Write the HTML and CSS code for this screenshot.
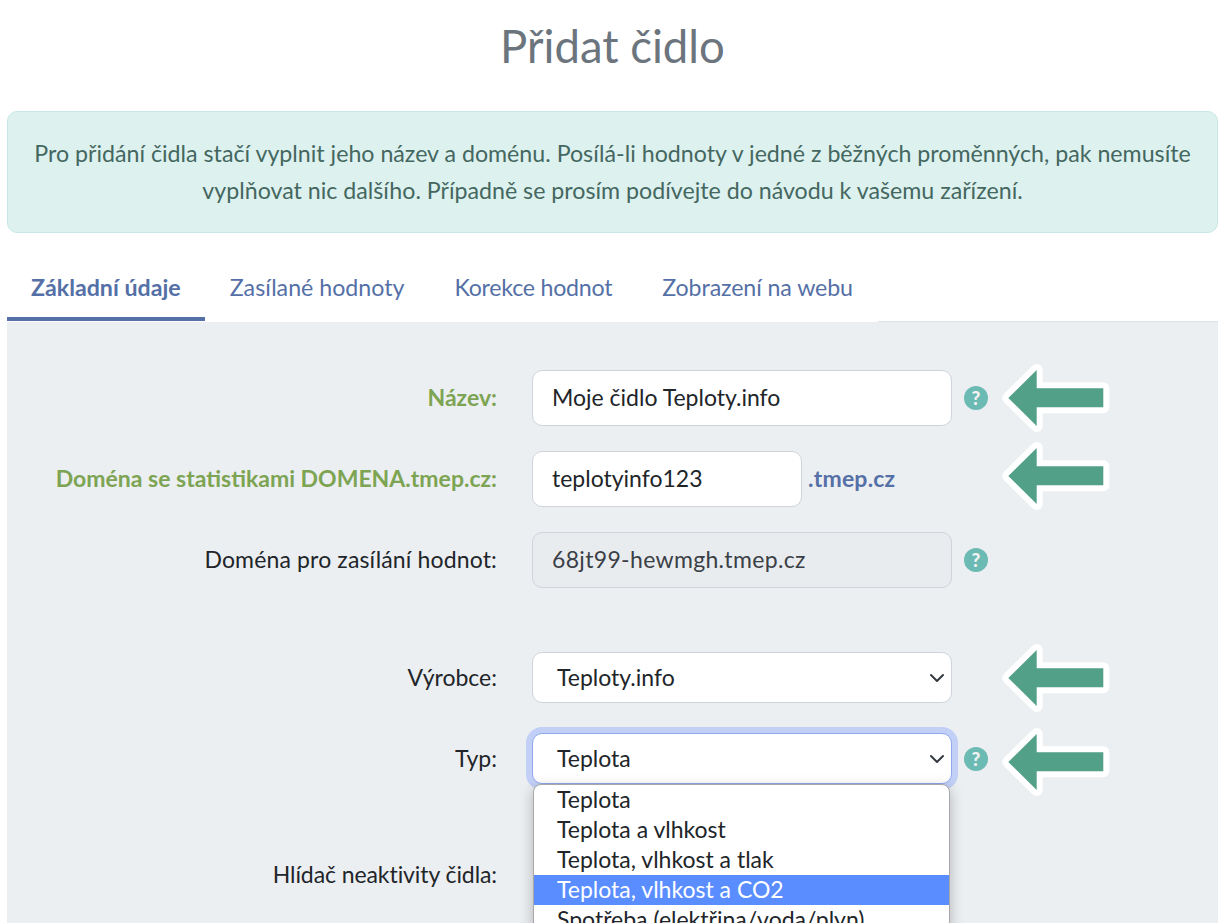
FILE: index.html
```html
<!DOCTYPE html>
<html lang="cs">
<head>
<meta charset="utf-8">
<title>Přidat čidlo</title>
<link rel="stylesheet" href="styles.css">
</head>
<body>
<main class="page">
  <h1 class="title">Přidat čidlo</h1>
  <div class="alert">Pro přidání čidla stačí vyplnit jeho název a doménu. Posílá-li hodnoty v jedné z běžných proměnných, pak nemusíte vyplňovat nic dalšího. Případně se prosím podívejte do návodu k vašemu zařízení.</div>
  <nav class="tabs">
    <a class="tab tab-active">Základní údaje</a>
    <a class="tab">Zasílané hodnoty</a>
    <a class="tab tab-tight">Korekce hodnot</a>
    <a class="tab tab-tight-s">Zobrazení na webu</a>
    <span class="tabs-rest"></span>
  </nav>
  <section class="panel">
    <div class="row">
      <label class="label label-green">Název:</label>
      <div class="field"><input class="control" value="Moje čidlo Teploty.info"></div>
      <span class="help">?</span>
      <svg class="arrow" viewBox="0 0 110 70"><path d="M7.3 35 35.7 7V25.3H102.3V44.3H35.7V63Z"/></svg>
    </div>
    <div class="row">
      <label class="label label-green">Doména se statistikami DOMENA.tmep.cz:</label>
      <div class="field"><input class="control control-short" value="teplotyinfo123"><span class="suffix">.tmep.cz</span></div>
      <span></span>
      <svg class="arrow arrow-up" viewBox="0 0 110 70"><path d="M7.3 35 35.7 7V25.3H102.3V44.3H35.7V63Z"/></svg>
    </div>
    <div class="row">
      <label class="label label-wide">Doména pro zasílání hodnot:</label>
      <div class="field"><input class="control" value="68jt99-hewmgh.tmep.cz" disabled></div>
      <span class="help">?</span>
    </div>
    <div class="row row-select row-maker">
      <label class="label">Výrobce:</label>
      <div class="field"><select class="control select"><option>Teploty.info</option></select></div>
      <span></span>
      <svg class="arrow" viewBox="0 0 110 70"><path d="M7.3 35 35.7 7V25.3H102.3V44.3H35.7V63Z"/></svg>
    </div>
    <div class="row row-select row-type">
      <label class="label">Typ:</label>
      <div class="field">
        <select class="control select select-focus"><option>Teplota</option></select>
        <ul class="dropdown">
          <li>Teplota</li>
          <li>Teplota a vlhkost</li>
          <li>Teplota, vlhkost a tlak</li>
          <li class="option-active">Teplota, vlhkost a CO2</li>
          <li>Spotřeba (elektřina/voda/plyn)</li>
        </ul>
      </div>
      <span class="help">?</span>
      <svg class="arrow arrow-down" viewBox="0 0 110 70"><path d="M7.3 35 35.7 7V25.3H102.3V44.3H35.7V63Z"/></svg>
    </div>
    <div class="row row-watch">
      <label class="label label-narrow">Hlídač neaktivity čidla:</label>
    </div>
  </section>
</main>
</body>
</html>
```
FILE: styles.css
```css
html, body {
  margin: 0;
  height: 923px;
  overflow: hidden;
  background: #fff;
}
body {
  font-family: Lato, "Open Sans", sans-serif;
  font-size: 23px;
  color: #212529;
}
.page {
  padding: 0 3px 0 7px;
}
.title {
  margin: 0;
  height: 111px;
  padding-top: 14px;
  box-sizing: border-box;
  font-size: 45.5px;
  line-height: 64px;
  font-weight: 400;
  text-align: center;
  color: #6c757d;
}
.alert {
  box-sizing: border-box;
  height: 122px;
  padding: 23px 20px;
  border: 1px solid #c9e8e5;
  border-radius: 10px;
  background: #ddf1ef;
  color: #44675f;
  font-size: 23.2px;
  line-height: 37px;
  text-align: center;
}
.tabs {
  display: flex;
  height: 60px;
  margin-top: 29px;
}
.tab {
  box-sizing: border-box;
  height: 59px;
  padding: 8px 25px 0;
  font-size: 23.2px;
  line-height: 34px;
  color: #5470a6;
}
.tab-active {
  padding-left: 24px;
  padding-right: 24px;
  font-weight: 700;
  border-bottom: 4px solid #5470a6;
}
.tab-tight {
  letter-spacing: -0.25px;
}
.tab-tight-s {
  letter-spacing: -0.1px;
}
.tabs-rest {
  flex: 1;
  height: 59px;
  border-bottom: 1px solid #dee2e6;
}
.panel {
  height: 601px;
  padding-top: 48px;
  box-sizing: border-box;
  background: #eceff2;
}
.row {
  display: grid;
  grid-template-columns: 490px 455px 36px 123px;
  grid-template-rows: 56px;
  align-items: center;
  margin-bottom: 25px;
}
.row-select {
  grid-template-rows: 51px;
}
.row-maker {
  margin-top: 64px;
  margin-bottom: 30px;
}
.row-type {
  margin-bottom: 63px;
}
.label {
  position: relative;
  top: -1px;
  text-align: right;
}
.label-green {
  color: #7da453;
  font-weight: 700;
}
.label-wide {
  letter-spacing: 0.15px;
}
.label-narrow {
  letter-spacing: -0.08px;
}
.field {
  position: relative;
  display: flex;
  align-items: center;
  height: 100%;
  margin-left: 35px;
  width: 420px;
}
.row > .help {
  margin-left: 12px;
}
.row > .arrow {
  margin-left: 13px;
}
.control {
  box-sizing: border-box;
  width: 100%;
  height: 100%;
  padding: 0 19px 2px;
  border: 1px solid #ced4da;
  border-radius: 10px;
  background: #fff;
  color: #212529;
  font: inherit;
}
.control:disabled {
  background: #e9ecef;
  color: #3a4046;
  opacity: 1;
  letter-spacing: 0.33px;
}
.control-short {
  width: 270px;
  flex: none;
}
.suffix {
  margin-left: 6px;
  margin-top: -2px;
  font-weight: 700;
  letter-spacing: 0.2px;
  color: #5470a6;
}
.select {
  appearance: none;
  padding: 0 40px 2px 24px;
  background: #fff url("data:image/svg+xml,%3Csvg xmlns='http://www.w3.org/2000/svg' viewBox='0 0 16 16'%3E%3Cpath fill='none' stroke='%23343a40' stroke-linecap='round' stroke-linejoin='round' stroke-width='2' d='M2 5l6 6 6-6'/%3E%3C/svg%3E") no-repeat right 6px center / 16px 16px;
}
.select-focus {
  border-color: #8fa8ee;
  box-shadow: 0 0 0 6px #c2cff6;
}
.help {
  display: flex;
  align-items: center;
  justify-content: center;
  width: 24px;
  height: 24px;
  border-radius: 50%;
  background: #6cbab4;
  color: #f2f2f2;
  font-size: 19px;
  font-weight: 900;
  line-height: 24px;
}
.arrow {
  width: 110px;
  height: 70px;
  align-self: center;
  overflow: visible;
}
.arrow path {
  fill: #52a088;
  stroke: #fff;
  stroke-width: 12px;
  stroke-linejoin: round;
  paint-order: stroke;
}
.arrow-up {
  margin-top: -6px;
}
.arrow-down {
  margin-top: 7px;
}
.dropdown {
  position: absolute;
  z-index: 2;
  top: 51px;
  left: 1px;
  box-sizing: border-box;
  width: 417px;
  margin: 0;
  padding: 0;
  list-style: none;
  overflow: hidden;
  border: 1px solid #a8a8a8;
  border-radius: 8px;
  background: #fff;
  box-shadow: 0 4px 14px rgba(0, 0, 0, 0.25);
}
.dropdown li {
  height: 30px;
  padding-left: 23px;
  line-height: 28px;
}
.dropdown .option-active {
  background: #5a8dff;
  color: #fff;
}
```
